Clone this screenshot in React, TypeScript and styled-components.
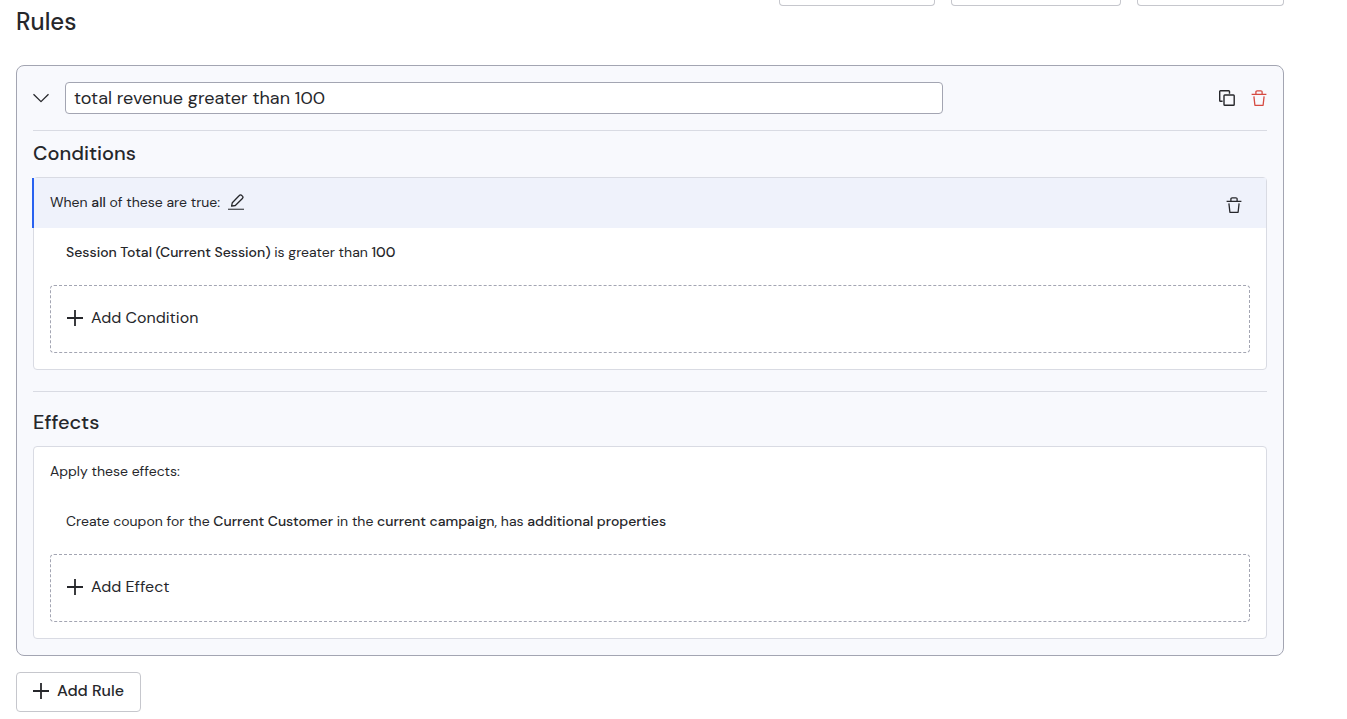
import React, { useState } from "react";
import styled, { createGlobalStyle } from "styled-components";

const color = {
  text: "#26272b",
  border: "#a3a5b2",
  control: "#c6c7cd",
  line: "#d9dbe3",
  surface: "#f8f9fd",
  header: "#eff2fb",
  accent: "#2962f0",
  danger: "#d64a41",
};

const GlobalStyle = createGlobalStyle`
  *, *::before, *::after { box-sizing: border-box; }
  body {
    margin: 0;
    background: #fff;
    color: ${color.text};
    font-family: "DM Sans", Inter, "Liberation Sans", sans-serif;
    font-size: 14px;
    line-height: 20px;
  }
  button, input { font: inherit; color: inherit; }
`;

const Page = styled.main`
  padding: 0 63px 7px 16px;
`;

const Toolbar = styled.div`
  display: flex;
  justify-content: flex-end;
  gap: 16px;
`;

const ToolbarButton = styled.button<{ $width: number }>`
  width: ${(p) => p.$width}px;
  height: 6px;
  padding: 0;
  background: #fff;
  border: 1px solid ${color.control};
  border-top: 0;
  border-radius: 0 0 4px 4px;
`;

const PageTitle = styled.h1`
  margin: 0 0 27px;
  font-size: 24px;
  line-height: 32px;
  font-weight: 500;
`;

const RuleCard = styled.section`
  padding: 16px;
  background: ${color.surface};
  border: 1px solid ${color.border};
  border-radius: 8px;
`;

const RuleHeader = styled.div`
  display: flex;
  align-items: center;
  gap: 16px;
  padding-bottom: 16px;
  border-bottom: 1px solid ${color.line};
`;

const NameField = styled.div`
  flex: 3 1 0;
  min-width: 0;
  margin-right: 16px;
`;

const NameInput = styled.input`
  display: block;
  width: 100%;
  height: 32px;
  padding: 0 8px;
  background: #fff;
  border: 1px solid ${color.border};
  border-radius: 4px;
  font-size: 18px;
`;

const Actions = styled.div`
  flex: 1 1 0;
  display: flex;
  justify-content: flex-end;
  gap: 16px;
`;

const IconButton = styled.button<{ $danger?: boolean }>`
  display: flex;
  padding: 0;
  background: none;
  border: 0;
  color: ${(p) => (p.$danger ? color.danger : color.text)};
  cursor: pointer;
`;

const SectionTitle = styled.h2<{ $spaced?: boolean }>`
  margin: 0;
  padding: ${(p) => (p.$spaced ? 16 : 8)}px 0 10px;
  font-size: 20px;
  line-height: 28px;
  font-weight: 500;
`;

const Divider = styled.hr`
  height: 1px;
  margin: 21px 0 0;
  border: 0;
  background: ${color.line};
`;

const Panel = styled.div`
  background: #fff;
  border: 1px solid ${color.line};
  border-radius: 4px;
`;

const PanelHeader = styled.div<{ $active?: boolean }>`
  display: flex;
  align-items: center;
  gap: 8px;
  height: 50px;
  padding: 0 24px 0 16px;
  ${(p) =>
    p.$active &&
    `
    margin-left: -2px;
    background: ${color.header};
    border-left: 2px solid ${color.accent};
  `}
`;

const HeaderLabel = styled.div`
  display: flex;
  align-items: center;
  gap: 8px;
  padding-bottom: 2px;

  b { font-weight: 500; }
`;

const HeaderEnd = styled.div`
  margin-left: auto;
  padding-top: 4px;
`;

const Sentence = styled.p`
  margin: 0;
  padding: 14px 32px 23px;

  b { font-weight: 500; }
`;

const AddArea = styled.button`
  display: flex;
  align-items: center;
  gap: 8px;
  width: calc(100% - 32px);
  height: 68px;
  margin: 0 16px 16px;
  padding: 0 16px 2px;
  background: none;
  border: 1px dashed ${color.border};
  border-radius: 4px;
  font-size: 16px;
  line-height: 24px;
  cursor: pointer;
`;

const AddRuleButton = styled.button`
  display: flex;
  align-items: center;
  gap: 8px;
  height: 40px;
  margin-top: 16px;
  padding: 0 16px 2px;
  background: #fff;
  border: 1px solid ${color.control};
  border-radius: 4px;
  font-size: 16px;
  line-height: 24px;
  font-weight: 500;
  cursor: pointer;
`;

const Svg = ({ width = 1.3, children }: { width?: number; children: React.ReactNode }) => (
  <svg
    width="16"
    height="16"
    viewBox="0 0 16 16"
    fill="none"
    stroke="currentColor"
    strokeWidth={width}
    strokeLinejoin="round"
    aria-hidden="true"
  >
    {children}
  </svg>
);

const ChevronIcon = () => (
  <Svg>
    <path d="M0.5 4.2 8 11.6 15.5 4.2" />
  </Svg>
);

const CopyIcon = () => (
  <Svg width={1.4}>
    <path d="M3.6 11.3H1.5a.8.8 0 0 1-.8-.8V1.5a.8.8 0 0 1 .8-.8h8.2a.8.8 0 0 1 .8.8v2.2" />
    <rect x="5" y="5" width="10.2" height="10.3" rx=".8" />
  </Svg>
);

const TrashIcon = () => (
  <Svg>
    <path d="M.6 4.4h14.8M4.9 4.2V2A1.2 1.2 0 0 1 6.1.8h3.8A1.2 1.2 0 0 1 11.1 2v2.2M2.9 6.4l1 8.9h8.2l1-8.9" />
  </Svg>
);

const EditIcon = () => (
  <Svg>
    <path d="M0 15.3h16" strokeOpacity=".8" />
    <path d="M3.6 12.2l.7-3.5 7-7.2a1.7 1.7 0 0 1 2.5 0l.6.6a1.7 1.7 0 0 1 0 2.4l-7.1 7z" />
  </Svg>
);

const PlusIcon = () => (
  <Svg width={1.8}>
    <path d="M8 0v16M0 8h16" />
  </Svg>
);

export default function App() {
  const [name, setName] = useState("total revenue greater than 100");

  return (
    <>
      <GlobalStyle />
      <Page>
        <Toolbar>
          <ToolbarButton $width={156} />
          <ToolbarButton $width={170} />
          <ToolbarButton $width={147} />
        </Toolbar>
        <PageTitle>Rules</PageTitle>
        <RuleCard>
          <RuleHeader>
            <IconButton aria-label="Collapse rule">
              <ChevronIcon />
            </IconButton>
            <NameField>
              <NameInput aria-label="Rule name" value={name} onChange={(e) => setName(e.target.value)} />
            </NameField>
            <Actions>
              <IconButton aria-label="Duplicate rule">
                <CopyIcon />
              </IconButton>
              <IconButton $danger aria-label="Delete rule">
                <TrashIcon />
              </IconButton>
            </Actions>
          </RuleHeader>

          <SectionTitle>Conditions</SectionTitle>
          <Panel>
            <PanelHeader $active>
              <HeaderLabel>
                <span>
                  When <b>all</b> of these are true:
                </span>
                <IconButton aria-label="Edit condition group">
                  <EditIcon />
                </IconButton>
              </HeaderLabel>
              <HeaderEnd>
                <IconButton aria-label="Delete condition group">
                  <TrashIcon />
                </IconButton>
              </HeaderEnd>
            </PanelHeader>
            <Sentence>
              <b>Session Total (Current Session)</b> is greater than <b>100</b>
            </Sentence>
            <AddArea>
              <PlusIcon />
              Add Condition
            </AddArea>
          </Panel>

          <Divider />
          <SectionTitle $spaced>Effects</SectionTitle>
          <Panel>
            <PanelHeader>
              <HeaderLabel>Apply these effects:</HeaderLabel>
            </PanelHeader>
            <Sentence>
              Create coupon for the <b>Current Customer</b> in the <b>current campaign</b>, has{" "}
              <b>additional properties</b>
            </Sentence>
            <AddArea>
              <PlusIcon />
              Add Effect
            </AddArea>
          </Panel>
        </RuleCard>
        <AddRuleButton>
          <PlusIcon />
          Add Rule
        </AddRuleButton>
      </Page>
    </>
  );
}
